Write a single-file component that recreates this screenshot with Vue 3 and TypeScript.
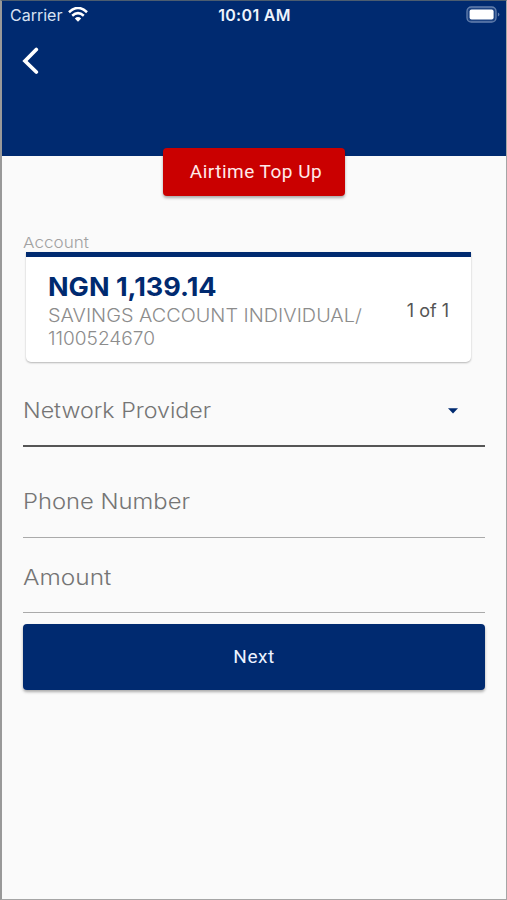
<script setup lang="ts">
import { ref } from 'vue'

interface Account {
  balance: string
  type: string
  number: string
}

interface Field {
  id: string
  label: string
}

const account: Account = {
  balance: 'NGN 1,139.14',
  type: 'SAVINGS ACCOUNT INDIVIDUAL/',
  number: '1100524670',
}

const fields: Field[] = [
  { id: 'phone', label: 'Phone Number' },
  { id: 'amount', label: 'Amount' },
]

const position = ref('1 of 1')
</script>

<template>
  <main class="screen">
    <header class="header">
      <div class="status">
        <div class="carrier">
          <span class="carrier-name">Carrier</span>
          <svg class="wifi" viewBox="0 0 20 15" width="20" height="15">
            <path d="M1 5.2 Q10 -3.2 19 5.2" fill="none" stroke="#fff" stroke-width="2.6" />
            <path d="M4.2 8.7 Q10 3.5 15.8 8.7" fill="none" stroke="#fff" stroke-width="2.5" />
            <path d="M6.8 11.4 Q10 8.6 13.2 11.4 L10 14.7 Z" fill="#fff" />
          </svg>
        </div>
        <span class="time">10:01 AM</span>
        <svg class="battery" viewBox="0 0 34 17" width="34" height="17">
          <rect x="1" y="1" width="29" height="15" rx="4.3" fill="#1d4383" stroke="#6480ae" stroke-width="1.3" />
          <rect x="3.6" y="3.4" width="24" height="10.2" rx="2" fill="#fff" />
          <path d="M31.9 6.4 Q33.4 7 33.4 8.5 Q33.4 10 31.9 10.6 Z" fill="#6480ae" />
        </svg>
      </div>
      <button class="back" type="button" aria-label="Back">
        <svg viewBox="0 0 18 28" width="18" height="28">
          <path d="M14.3 2.5 L3 14 L14.3 25" fill="none" stroke="#fff" stroke-width="3.7" stroke-linecap="round" />
        </svg>
      </button>
    </header>

    <div class="title-row">
      <button class="title-button" type="button">Airtime Top Up</button>
    </div>

    <form class="form" @submit.prevent>
      <div class="account-label"><span>Account</span></div>
      <section class="card">
        <div class="details">
          <div class="balance">{{ account.balance }}</div>
          <div class="account-type">{{ account.type }}</div>
          <div class="account-number">{{ account.number }}</div>
        </div>
        <div class="position">{{ position }}</div>
      </section>

      <div class="field provider">
        <span class="label">Network Provider</span>
        <svg class="caret" viewBox="0 0 10 6" width="10" height="6">
          <path d="M0 0.2 H10 L5 5.5 Z" fill="#002a70" />
        </svg>
      </div>
      <div v-for="field in fields" :key="field.id" class="field" :class="field.id">
        <span class="label">{{ field.label }}</span>
      </div>
      <button class="next" type="submit">Next</button>
    </form>
  </main>
</template>

<style>
body {
  margin: 0;
}
</style>

<style scoped>
.screen {
  box-sizing: border-box;
  width: 507px;
  height: 900px;
  overflow: hidden;
  border: 1px solid #a5a5a5;
  border-left: 2px solid #999;
  border-top: 1px solid #4c5d70;
  background: #fafafa;
  font-family: Inter, "Liberation Sans", sans-serif;
}

button {
  padding: 0;
  border: 0;
  font-family: inherit;
}

.header {
  height: 154.5px;
  background: #002a70;
  color: #fff;
}

.status {
  display: grid;
  grid-template-columns: 1fr auto 1fr;
  align-items: center;
  height: 27px;
  padding: 0 7px 0 8px;
}

.carrier {
  display: flex;
  align-items: center;
  gap: 6px;
}

.carrier-name {
  color: #d8e2f3;
  font-size: 16px;
}

.time {
  color: #eef3fc;
  font-size: 16px;
  font-weight: 600;
  letter-spacing: 0.3px;
}

.battery {
  margin-right: -1px;
  justify-self: end;
}

.back {
  display: flex;
  margin: 19px 0 0 20px;
  background: none;
}

.title-row {
  display: flex;
  justify-content: center;
  margin-top: -7.5px;
}

.title-button {
  width: 182px;
  height: 48px;
  padding: 0 0 1px 4px;
  border-radius: 4px;
  background: #ca0000;
  box-shadow: 0 2px 3px rgba(0, 0, 0, 0.32);
  color: #ffe9e9;
  font-family: Roboto, sans-serif;
  font-size: 19px;
  letter-spacing: 0.5px;
}

.form {
  display: flex;
  flex-direction: column;
  padding: 36px 21px 0;
}

.account-label {
  height: 20px;
  color: #a2a2a2;
  font-size: 15px;
  font-weight: 300;
  line-height: 21px;
  transform: scaleX(1.14);
  transform-origin: left;
}

.card {
  display: flex;
  justify-content: space-between;
  box-sizing: border-box;
  height: 110px;
  margin: 0 14px 0 3px;
  padding: 15px 22px 0;
  border-top: 5px solid #002a70;
  border-radius: 0 0 5px 5px;
  background: #fff;
  box-shadow: 0 1px 2px rgba(0, 0, 0, 0.28);
}

.details {
  width: 285px;
}

.balance {
  color: #002a70;
  font-size: 26px;
  font-weight: 700;
  line-height: 30px;
  transform: scaleX(1.04);
  transform-origin: left;
}

.account-type,
.account-number {
  color: #8c8c8c;
  font-size: 18px;
  font-weight: 300;
  line-height: 23px;
  white-space: nowrap;
  transform: scaleX(1.102);
  transform-origin: left;
}

.account-type {
  margin-top: 2px;
}

.account-number {
  transform: scaleX(1.06);
}

.position {
  padding-top: 28px;
  color: #555;
  font-size: 18px;
  line-height: 22px;
}

.field {
  display: flex;
  align-items: center;
  box-sizing: border-box;
  border-bottom: 1.5px solid #aaa;
  color: #757575;
  font-size: 21px;
  font-weight: 300;
}

.label {
  transform-origin: left;
}

.provider .label {
  transform: scaleX(1.106);
}

.phone .label {
  transform: scaleX(1.133);
}

.amount .label {
  transform: scaleX(1.165);
}

.provider {
  justify-content: space-between;
  height: 71px;
  margin-top: 14px;
  padding-right: 27px;
  border-bottom: 2px solid #555;
}

.phone {
  height: 72px;
  margin-top: 19px;
}

.amount {
  height: 70px;
  margin-top: 5px;
}

.next {
  height: 66px;
  margin-top: 11px;
  padding-bottom: 1px;
  border-radius: 4px;
  background: #002a70;
  box-shadow: 0 2px 3px rgba(0, 0, 0, 0.32);
  color: #edf3ff;
  font-family: Roboto, sans-serif;
  font-size: 19px;
  letter-spacing: 0.5px;
}
</style>
